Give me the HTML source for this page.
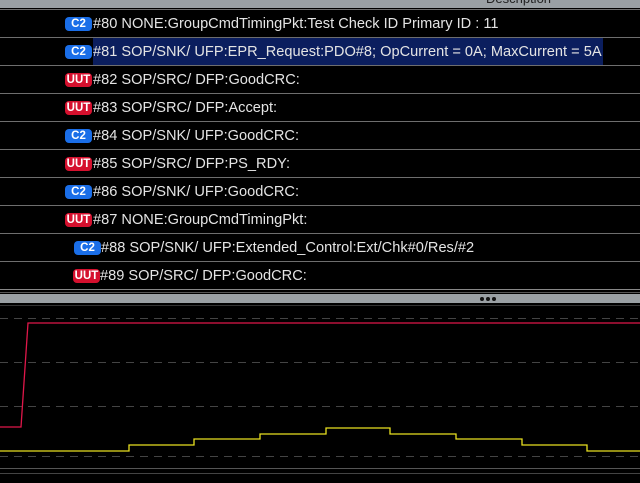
<!DOCTYPE html>
<html><head><meta charset="utf-8"><style>
*{margin:0;padding:0;box-sizing:border-box}
body{width:640px;height:483px;background:#000;position:relative;overflow:hidden;font-family:"Liberation Sans",Arial,sans-serif}
.hdr{position:absolute;left:0;top:0;width:640px;height:8px;background:#9aa0a4;overflow:hidden}
.hdr span{position:absolute;left:486px;top:-9px;font-size:13px;color:#222}
.row{position:absolute;left:0;width:640px;height:28px;border-top:1px solid #6e6e6e}
.t{position:absolute;top:6px;font-size:14.6px;color:#e4e4e4;white-space:nowrap;line-height:16px}
.b{position:absolute;top:7px;width:27px;height:14px;border-radius:4px;color:#fff;font-weight:bold;font-size:11.5px;text-align:center;line-height:14px}
.c2{background:#1a6ee8}.uut{background:#d5102e}
.sel{position:absolute;left:93px;top:0;width:510px;height:27px;background:#0b1e5e}
</style></head><body>
<div class="hdr"><span>Description</span></div>
<div class="row" style="top:9px"><div class="b c2" style="left:65px">C2</div><div class="t" style="left:93px">#80 NONE:GroupCmdTimingPkt:Test Check ID Primary ID : 11</div></div>
<div class="row" style="top:37px"><div class="sel"></div><div class="b c2" style="left:65px">C2</div><div class="t" style="left:93px">#81 SOP/SNK/ UFP:EPR_Request:PDO#8; OpCurrent = 0A; MaxCurrent = 5A</div></div>
<div class="row" style="top:65px"><div class="b uut" style="left:65px">UUT</div><div class="t" style="left:93px">#82 SOP/SRC/ DFP:GoodCRC:</div></div>
<div class="row" style="top:93px"><div class="b uut" style="left:65px">UUT</div><div class="t" style="left:93px">#83 SOP/SRC/ DFP:Accept:</div></div>
<div class="row" style="top:121px"><div class="b c2" style="left:65px">C2</div><div class="t" style="left:93px">#84 SOP/SNK/ UFP:GoodCRC:</div></div>
<div class="row" style="top:149px"><div class="b uut" style="left:65px">UUT</div><div class="t" style="left:93px">#85 SOP/SRC/ DFP:PS_RDY:</div></div>
<div class="row" style="top:177px"><div class="b c2" style="left:65px">C2</div><div class="t" style="left:93px">#86 SOP/SNK/ UFP:GoodCRC:</div></div>
<div class="row" style="top:205px"><div class="b uut" style="left:65px">UUT</div><div class="t" style="left:93px">#87 NONE:GroupCmdTimingPkt:</div></div>
<div class="row" style="top:233px"><div class="b c2" style="left:74px">C2</div><div class="t" style="left:101px">#88 SOP/SNK/ UFP:Extended_Control:Ext/Chk#0/Res/#2</div></div>
<div class="row" style="top:261px"><div class="b uut" style="left:73px">UUT</div><div class="t" style="left:100px">#89 SOP/SRC/ DFP:GoodCRC:</div></div>
<svg style="position:absolute;left:0;top:0" width="640" height="483">
<line x1="0" y1="289.5" x2="640" y2="289.5" stroke="#888"/>
<line x1="0" y1="292.5" x2="640" y2="292.5" stroke="#555"/>
<rect x="0" y="294" width="640" height="9" fill="#9aa0a4"/>
<circle cx="482" cy="299" r="2" fill="#111"/><circle cx="488" cy="299" r="2" fill="#111"/><circle cx="494" cy="299" r="2" fill="#111"/>
<line x1="0" y1="305.5" x2="640" y2="305.5" stroke="#333"/>
<g stroke="#444" stroke-dasharray="8,6">
<line x1="0" y1="318.5" x2="640" y2="318.5"/><line x1="0" y1="362.5" x2="640" y2="362.5"/>
<line x1="0" y1="406.5" x2="640" y2="406.5"/><line x1="0" y1="456.5" x2="640" y2="456.5"/></g>
<polyline fill="none" stroke="#e0174a" stroke-width="1.3" points="0,427 21,427 28,323 640,323"/>
<polyline fill="none" stroke="#e8e020" stroke-width="1.3" points="0,451 129,451 129,445 194,445 194,439 260,439 260,434 326,434 326,428 390,428 390,434 456,434 456,439 522,439 522,445 587,445 587,451 640,451"/>
<line x1="0" y1="468.5" x2="640" y2="468.5" stroke="#555"/>
<line x1="0" y1="473.5" x2="640" y2="473.5" stroke="#444"/>
</svg>
</body></html>
